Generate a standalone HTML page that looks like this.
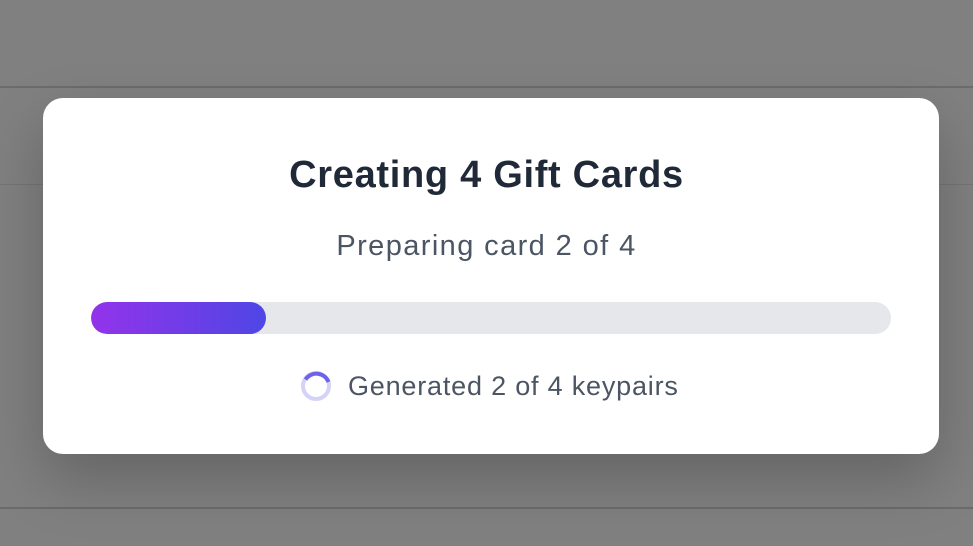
<!DOCTYPE html>
<html><head><meta charset="utf-8"><style>
html,body{margin:0;padding:0;}
body{width:973px;height:546px;background:#7f807f;position:relative;overflow:hidden;font-family:"Liberation Sans",sans-serif;}
.line{position:absolute;left:0;width:973px;height:2px;}
.modal{position:absolute;left:43px;top:98px;width:896px;height:356px;background:#fff;border-radius:20px;box-shadow:0 25px 60px rgba(0,0,0,0.22);}
h1{position:absolute;left:0;right:0;top:152px;margin:0;text-align:center;font-size:38px;letter-spacing:0.7px;font-weight:bold;color:#1f2937;line-height:46px;}
.sub{position:absolute;left:0;right:0;top:229px;text-align:center;font-size:29px;letter-spacing:1.4px;color:#4b5563;line-height:34px;}
.track{position:absolute;left:91px;top:302px;width:800px;height:32px;background:#e5e7eb;border-radius:16px;overflow:hidden;}
.fill{width:175px;height:32px;border-radius:16px;background:linear-gradient(90deg,#9333ea,#4f46e5);}
.st{position:absolute;left:348px;top:370px;font-size:27px;letter-spacing:0.8px;color:#4b5563;line-height:32px;white-space:nowrap;}
svg{position:absolute;left:300px;top:370px;}
</style></head><body>
<div class="line" style="top:86px;background:#6c6c70"></div>
<div class="line" style="top:184px;height:1px;background:#747575"></div>
<div class="line" style="top:507px;background:#6a6b6b"></div>
<div class="modal"></div>
<h1>Creating 4 Gift Cards</h1>
<div class="sub">Preparing card 2 of 4</div>
<div class="track"><div class="fill"></div></div>
<svg width="32" height="32" viewBox="0 0 32 32"><circle cx="16" cy="16" r="13" fill="none" stroke="#d4d2f7" stroke-width="4"/><path d="M5.5 9.5 A13 13 0 0 1 28.5 12" fill="none" stroke="#6c63e8" stroke-width="4"/></svg>
<div class="st">Generated 2 of 4 keypairs</div>
</body></html>
